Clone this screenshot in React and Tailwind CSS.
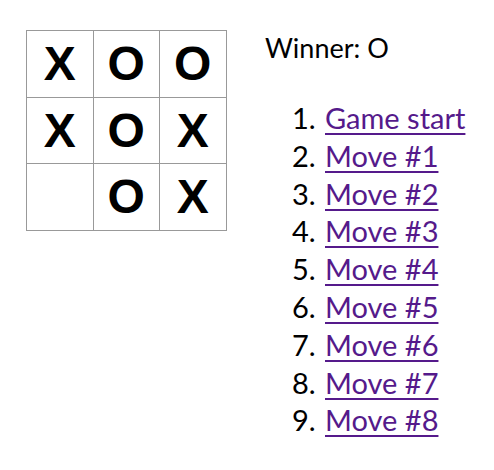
import React from 'react';

const squares = ['X', 'O', 'O', 'X', 'O', 'X', null, 'O', 'X'];
const moves = ['Game start', 'Move #1', 'Move #2', 'Move #3', 'Move #4', 'Move #5', 'Move #6', 'Move #7', 'Move #8'];

const Square = ({ value }) => (
  <button className="w-[67.5px] h-[67.5px] -mr-px -mt-px border border-[#999] bg-white p-0 text-[48px] leading-[66px] font-bold text-black font-['Liberation_Sans',Arial,sans-serif]">
    {value}
  </button>
);

export default function App() {
  return (
    <div className="flex bg-white min-h-[470px] pl-[26px] pt-[31px] font-['Lato','Noto_Sans',sans-serif]">
      {/* Board */}
      <div className="w-[202px] flex flex-wrap content-start h-[200px]">
        {squares.map((s, i) => (
          <Square key={i} value={s} />
        ))}
      </div>

      {/* Game info */}
      <div className="ml-[37px]">
        <div className="text-[27px] leading-[30px] text-black mt-[2px]">Winner: O</div>
        <ol className="list-decimal mt-[36px] pl-[58px] text-[29px] leading-[37.8px] text-black">
          {moves.map((m, i) => (
            <li key={i} className="pl-[2px]">
              <a href="#" className="text-[#551a8b] underline decoration-2 underline-offset-4">
                {m}
              </a>
            </li>
          ))}
        </ol>
      </div>
    </div>
  );
}
